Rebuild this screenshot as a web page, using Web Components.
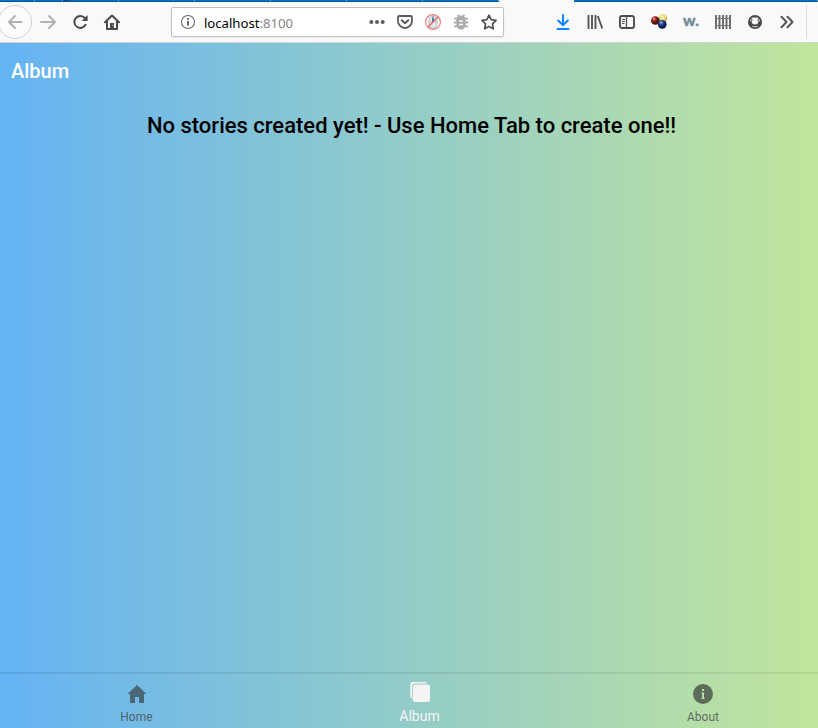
<!DOCTYPE html>
<html lang="en">
<head>
<meta charset="utf-8">
<title>Album</title>
<style>
html,body{margin:0;height:100%;overflow:hidden}
body{font-family:Roboto,"Liberation Sans",sans-serif}
</style>
</head>
<body>
<album-window></album-window>
<script>
const icons = {
  back:'<path d="M14.5 8H2M8 2 2 8l6 6" fill="none" stroke="#b1b1b1" stroke-width="2" stroke-linecap="round" stroke-linejoin="round"/>',
  forward:'<path d="M1 8h14M9 2l6 6-6 6" fill="none" stroke="#b1b1b1" stroke-width="2" stroke-linecap="round" stroke-linejoin="round"/>',
  reload:'<path d="M13.6 10.8A6 6 0 1 1 12.9 4" fill="none" stroke="#4a4a4a" stroke-width="2" stroke-linecap="round"/><path d="M15.6 1v6H9.6z" fill="#4a4a4a"/>',
  home:'<path d="M1 8.3 8 1.5l7 6.8M3 7.5V15h10V7.5" fill="none" stroke="#4a4a4a" stroke-width="2" stroke-linecap="round" stroke-linejoin="round"/><path d="M6 15V9h4v6" fill="#4a4a4a"/><path d="M8.3 11h1v1h-1z" fill="#ddd"/>',
  info:'<circle cx="8" cy="8" r="6.5" fill="none" stroke="#6b6b6b" stroke-width="1.1"/><path d="M7.1 7h1.8v4.5H7.1z" fill="#555"/><circle cx="8" cy="5" r="1.1" fill="#555"/>',
  dots:'<g fill="#5c5c5c"><circle cx="2.3" cy="8" r="2"/><circle cx="8" cy="8" r="2"/><circle cx="13.7" cy="8" r="2"/></g>',
  pocket:'<path d="M2.2 2h11.6q1.2 0 1.2 1.2V7A7 7 0 0 1 1 7V3.2Q1 2 2.2 2z" fill="none" stroke="#5c5c5c" stroke-width="1.8"/><path d="M4.8 6.2 8 9.2l3.2-3" fill="none" stroke="#5c5c5c" stroke-width="2" stroke-linecap="round" stroke-linejoin="round"/>',
  mouse:'<rect x="3.8" y="2.5" width="8.4" height="11.5" rx="3.5" fill="#e5e8ea" stroke="#a9b0b6" stroke-width=".8"/><path d="M4 8h8" stroke="#a9b0b6" stroke-width=".7"/><path d="M8 1v3" stroke="#888"/><path d="M7 4h2v4H7z" fill="#3c7da8"/><circle cx="8" cy="8" r="7.4" fill="none" stroke="#ec8180" stroke-width="1.2"/><path d="M2.8 13.2 13.2 2.8" stroke="#e46a66" stroke-width="1.4"/>',
  bug:'<g stroke="#ababab" stroke-width="1.8"><path d="M1 4.6h3M12 4.6h3M.8 8.5h3M12 8.5h3.2M1 12.4h3M12 12.4h3M4.5.8l2 2M11.5.8l-2 2"/></g><path d="M8 1.5c3.2 0 4.7 2 4.7 5V10c0 3.5-1.8 5.5-4.7 5.5S3.3 13.5 3.3 10V6.5c0-3 1.5-5 4.7-5z" fill="#ababab"/><path d="M6 7h4M6 10.5h4" stroke="#fff" stroke-width="1.5"/>',
  star:'<path d="m8 1.2 2.1 4.5 4.9.7-3.5 3.5.8 4.9L8 12.5l-4.3 2.3.8-4.9L1 6.4l4.9-.7z" fill="none" stroke="#555" stroke-width="1.8" stroke-linejoin="round"/>',
  download:'<path d="M8 1v10M3.2 6.5 8 11.2l4.8-4.7M2.5 15h11" fill="none" stroke="#0a84ff" stroke-width="2" stroke-linecap="round" stroke-linejoin="round"/>',
  library:'<path d="M1.5 1v14M5 1v14M8.5 1v14M10.8 2l4.5 12.5" fill="none" stroke="#555" stroke-width="1.9"/>',
  sidebar:'<rect x="1" y="2" width="14" height="12" rx="2" fill="none" stroke="#4c4c4c" stroke-width="1.9"/><path d="M7.5 2v12" stroke="#555" stroke-width="1.3"/><path d="M3 5.5h3M3 7.5h3M3 9.5h2.5" stroke="#555"/>',
  balls:'<defs><radialGradient id="r" cx=".35" cy=".3"><stop stop-color="#f5b0a4"/><stop offset=".4" stop-color="#b52f20"/><stop offset="1" stop-color="#4b100a"/></radialGradient><radialGradient id="y" cx=".45" cy=".35"><stop stop-color="#fff6c9"/><stop offset=".6" stop-color="#f0d778"/><stop offset="1" stop-color="#c9b35d"/></radialGradient><radialGradient id="b" cx=".38" cy=".3"><stop stop-color="#a8c5f4"/><stop offset=".4" stop-color="#2e58a5"/><stop offset="1" stop-color="#0e1d48"/></radialGradient></defs><circle cx="12" cy="4.5" r="4.2" fill="url(#y)"/><circle cx="4.3" cy="6.5" r="4.3" fill="url(#r)"/><circle cx="11.2" cy="10.3" r="4.4" fill="url(#b)"/>',
  fence:'<path d="M1 1v14M4.5 1v14M8 1v14M11.5 1v14M15 1v14" stroke="#666" stroke-width="1.9"/><path d="M0 4.5h16M0 11.5h16" stroke="#777" stroke-width="1.2"/>',
  account:'<circle cx="8" cy="8" r="7" fill="#484848"/><path d="M3 7A5.2 5.2 0 0 1 5.500 3.600H10.500A5.200 5.200 0 0 1 13 7.200H11.300A3.300 3.300 0 0 1 4.700 7.200z" fill="#f9f9fa"/><path d="M4.800 4.500v2.500M11.200 4.500v2.500" stroke="#484848" stroke-width="1"/><path d="M4.600 11.700Q8 13.300 11.400 11.700 10.200 13.300 8 13.300T4.600 11.700z" fill="#f9f9fa"/>',
  more:'<path d="m2.5 2.8 5 5.2-5 5.2M8.5 2.8l5 5.2-5 5.2" fill="none" stroke="#555" stroke-width="2" stroke-linecap="round" stroke-linejoin="round"/>'
};
class BrowserIcon extends HTMLElement{
  constructor(){
    super();
    this.attachShadow({mode:'open'}).innerHTML=`<style>:host{display:block;flex:none;width:16px;height:16px}svg{display:block;width:16px;height:16px;overflow:visible}</style><svg viewBox="0 0 16 16">${icons[this.getAttribute('name')]}</svg>`;
  }
}
class BrowserAddress extends HTMLElement{
  constructor(){
    super();
    this.attachShadow({mode:'open'}).innerHTML=`<style>
    :host{display:flex;align-items:center;box-sizing:border-box;width:333px;height:30px;border:1px solid #c2c2c2;border-radius:2px;background:#fff;padding:0 6px 0 8px;box-shadow:0 1px 2px #0001}
    span{font:13.2px/18px "Noto Sans","Open Sans",sans-serif;margin:2px auto 0 8px;color:#000;letter-spacing:-.03px}
    i{font-style:normal;color:#858585}
    div{display:flex;gap:12px}</style>
    <browser-icon name="info"></browser-icon><span>localhost<i>:8100</i></span>
    <div><browser-icon name="dots"></browser-icon><browser-icon name="pocket"></browser-icon><browser-icon name="mouse"></browser-icon><browser-icon name="bug"></browser-icon><browser-icon name="star"></browser-icon></div>`;
  }
}
class BrowserToolbar extends HTMLElement{
  constructor(){
    super();
    this.attachShadow({mode:'open'}).innerHTML=`<style>
    :host{display:block;height:43px;box-sizing:border-box;background:#f9f9fa;border-bottom:1px solid #d3d3d3}
    .strip{height:2px;display:grid;grid-template-columns:35px 28px 56px 76px 76px 76px 76px 76px 75px 1fr;background:#f9f9fa}
    .strip b{box-sizing:border-box;background:#0873ca;border-right:1px solid #5aa6df;border-bottom:1px solid #05559d}
    .strip b:nth-child(3){background:linear-gradient(90deg,#063b6e,#0873ca 12px)}
    .strip b:nth-child(9){background:none;border:0}
    .bar{display:flex;align-items:center;height:40px}
    .back{box-sizing:border-box;width:34px;height:34px;border:1px solid #d0d0d0;border-radius:50%;margin-left:-2px;display:grid;place-items:center;background:#fcfcfc}
    .nav{display:flex;gap:16px;margin-left:8px}
    browser-address{margin-left:51px}
    .tools{display:flex;gap:16px;margin-left:51px}
    .w{width:16px;height:16px;font:900 15.5px/13px Lato,sans-serif;color:#748c98;-webkit-text-stroke:.4px #748c98;display:flex;justify-content:center}
    .end{width:1px;height:34px;background:#d9d9d9;margin-left:11px}</style>
    <div class="strip"><b></b><b></b><b></b><b></b><b></b><b></b><b></b><b></b><b></b><b></b></div>
    <div class="bar"><div class="back"><browser-icon name="back"></browser-icon></div>
    <div class="nav"><browser-icon name="forward"></browser-icon><browser-icon name="reload"></browser-icon><browser-icon name="home"></browser-icon></div>
    <browser-address></browser-address>
    <div class="tools"><browser-icon name="download"></browser-icon><browser-icon name="library"></browser-icon><browser-icon name="sidebar"></browser-icon><browser-icon name="balls"></browser-icon><div class="w">w.</div><browser-icon name="fence"></browser-icon><browser-icon name="account"></browser-icon><browser-icon name="more"></browser-icon></div><div class="end"></div></div>`;
  }
}
class AlbumTab extends HTMLElement{
  constructor(){
    super();
    this.attachShadow({mode:'open'}).innerHTML=`<style>
    :host{display:flex;flex-direction:column;align-items:center;box-sizing:border-box;padding-top:9px;color:rgba(65,65,65,.75);font:12px/14px Roboto,sans-serif;letter-spacing:.04px}
    ::slotted(svg){display:block;width:22px;height:22px}
    .label{margin-top:5px}
    :host([selected]){color:#f4f4f4;padding-top:7px;font-size:14px;line-height:16px}
    </style><slot name="icon"></slot><span class="label"><slot></slot></span>`;
  }
}
class AlbumWindow extends HTMLElement{
  constructor(){
    super();
    this.attachShadow({mode:'open'}).innerHTML=`<style>
    :host{display:flex;flex-direction:column;width:818px;height:728px}
    .page{flex:1;display:flex;flex-direction:column;overflow:hidden;background:linear-gradient(90deg,#64b3f4,#c2e59c)}
    header{height:56px;box-sizing:border-box;padding:16px 11px;font:500 20px/24px Roboto,sans-serif;color:#fff}
    main{flex:1;padding-top:13px;text-align:center}
    h1{margin:0;padding-left:5px;font:500 22px/28px Roboto,sans-serif;color:#000}
    nav{box-sizing:border-box;height:56px;display:grid;grid-template-columns:283px 283px 284px;padding-top:1px;margin-right:-27px;margin-left:-5px;border-top:1px solid rgba(0,0,0,.08);box-shadow:inset 0 1px rgba(0,0,0,.07)}
    </style>
    <browser-toolbar></browser-toolbar>
    <div class="page"><header>Album</header><main><h1>No stories created yet! - Use Home Tab to create one!!</h1></main>
    <nav>
    <album-tab><svg slot="icon" viewBox="0 0 22 22"><path d="M11 2 1.5 11H4V20h5v-6h4v6h5v-9h2.5z" fill="#4b6878"/></svg>Home</album-tab>
    <album-tab selected><svg slot="icon" viewBox="0 0 22 22"><path d="M3 17.5a2 2 0 0 1-1.7-2V3.5A2.500 2.500 0 0 1 3.800 1H16a2 2 0 0 1 1.800 1.600H6A3 3 0 0 0 3 5.600z" fill="#f4f4f4"/><rect x="3.700" y="3.600" width="17.300" height="17.300" rx="2.500" fill="#f4f4f4"/></svg>Album</album-tab>
    <album-tab><svg slot="icon" viewBox="0 0 22 22"><path fill-rule="evenodd" d="M11 1a10 10 0 1 0 0 20 10 10 0 0 0 0-20zM10 6h2v2h-2zM9.5 9.5H12V15h.7v1H9.3v-1h.7v-4.5h-.5z" fill="#5d6d5b"/></svg>About</album-tab>
    </nav></div>`;
  }
}
customElements.define('browser-icon',BrowserIcon);
customElements.define('browser-address',BrowserAddress);
customElements.define('browser-toolbar',BrowserToolbar);
customElements.define('album-tab',AlbumTab);
customElements.define('album-window',AlbumWindow);
</script>
</body>
</html>
